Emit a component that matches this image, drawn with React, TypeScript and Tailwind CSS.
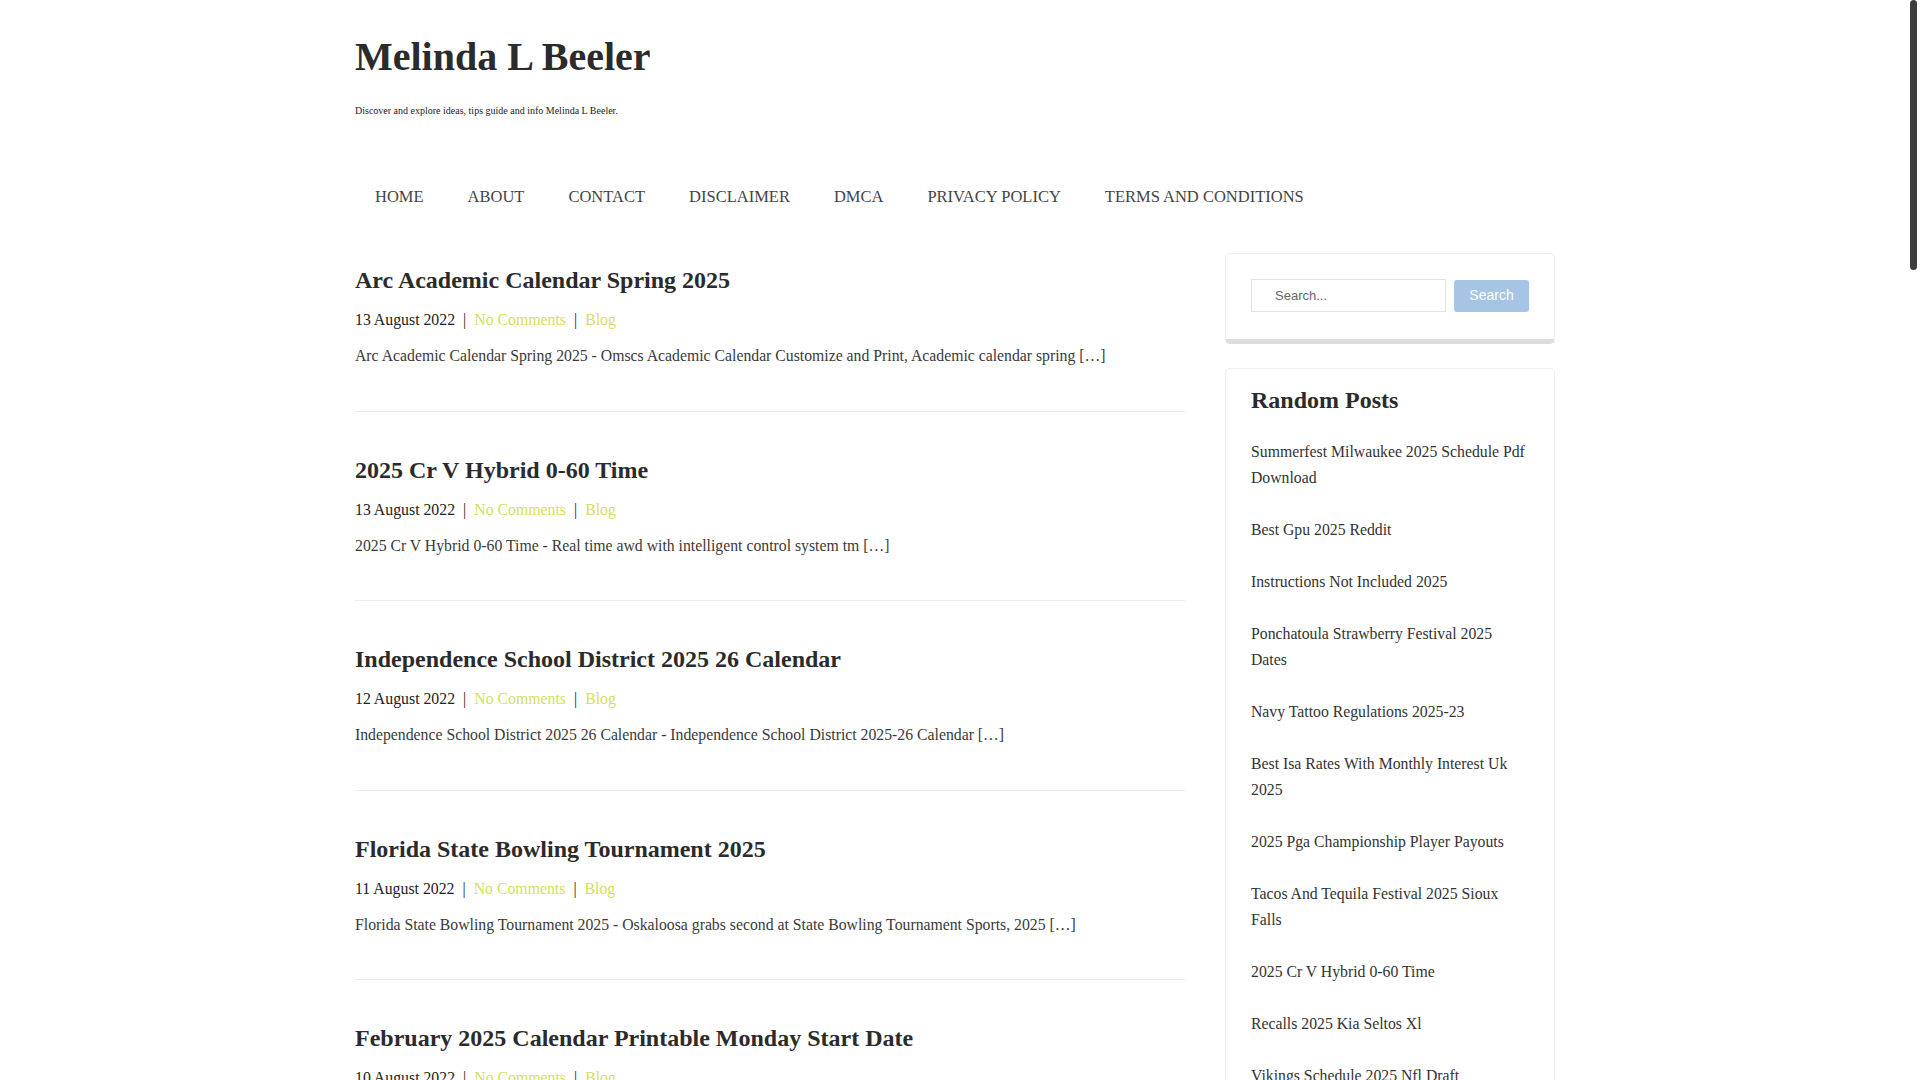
import React from "react";

const posts = [
  {
    title: "Arc Academic Calendar Spring 2025",
    date: "13 August 2022",
    excerpt:
      "Arc Academic Calendar Spring 2025 - Omscs Academic Calendar Customize and Print, Academic calendar spring […]",
  },
  {
    title: "2025 Cr V Hybrid 0-60 Time",
    date: "13 August 2022",
    excerpt: "2025 Cr V Hybrid 0-60 Time - Real time awd with intelligent control system tm […]",
  },
  {
    title: "Independence School District 2025 26 Calendar",
    date: "12 August 2022",
    excerpt:
      "Independence School District 2025 26 Calendar - Independence School District 2025-26 Calendar […]",
  },
  {
    title: "Florida State Bowling Tournament 2025",
    date: "11 August 2022",
    excerpt:
      "Florida State Bowling Tournament 2025 - Oskaloosa grabs second at State Bowling Tournament Sports, 2025 […]",
  },
  {
    title: "February 2025 Calendar Printable Monday Start Date",
    date: "10 August 2022",
    excerpt:
      "February 2025 Calendar Printable Monday Start Date - February 2025 Calendar Printable Monday Start […]",
  },
];

const randomPosts = [
  "Summerfest Milwaukee 2025 Schedule Pdf Download",
  "Best Gpu 2025 Reddit",
  "Instructions Not Included 2025",
  "Ponchatoula Strawberry Festival 2025 Dates",
  "Navy Tattoo Regulations 2025-23",
  "Best Isa Rates With Monthly Interest Uk 2025",
  "2025 Pga Championship Player Payouts",
  "Tacos And Tequila Festival 2025 Sioux Falls",
  "2025 Cr V Hybrid 0-60 Time",
  "Recalls 2025 Kia Seltos Xl",
  "Vikings Schedule 2025 Nfl Draft",
];

const nav = ["HOME", "ABOUT", "CONTACT", "DISCLAIMER", "DMCA", "PRIVACY POLICY", "TERMS AND CONDITIONS"];

export default function App() {
  return (
    <div className="min-h-screen bg-white text-[#333] font-['Liberation_Serif','Times_New_Roman',serif]">
      <div className="pointer-events-none fixed right-[3px] top-0 h-[270px] w-[7px] rounded-full bg-[#3d3d3d]" />
      <div className="mx-auto w-[1210px] pr-[10px]">
        <header className="pt-[33px]">
          <h1 className="text-[40px] font-bold leading-[48px] text-[#2b2b2b]">Melinda L Beeler</h1>
          <p className="mt-[22px] text-[10px] leading-[15px] text-[#222]">
            Discover and explore ideas, tips guide and info Melinda L Beeler.
          </p>
        </header>
        <nav className="mt-[67px] flex gap-[44px] pl-5">
          {nav.map((n) => (
            <a key={n} className="text-[16.5px] leading-6 text-[#444]">
              {n}
            </a>
          ))}
        </nav>
        <div className="mt-[44px] flex gap-[40px]">
          <main className="w-[830px]">
            {posts.map((p, i) => (
              <article
                key={p.title}
                className={`border-b border-[#ececec] pb-[42.5px] ${i === 0 ? "pt-3" : "pt-[43px]"}`}
              >
                <h2 className="text-[24px] font-bold leading-[30px] text-[#2b2b2b]">{p.title}</h2>
                <div className="mt-[13px] text-[15.8px] leading-6 text-[#222]">
                  {p.date}
                  <span className="px-[8px]">|</span>
                  <a className="text-[#d4df5b]">No Comments</a>
                  <span className="px-[8px]">|</span>
                  <a className="text-[#d4df5b]">Blog</a>
                </div>
                <p className="mt-[12px] text-[15.75px] leading-6 text-[#3a3a3a]">{p.excerpt}</p>
              </article>
            ))}
          </main>
          <aside className="w-[330px]">
            <div className="rounded-[5px] border border-[#eee] border-b-[5px] border-b-[#ddd] px-[25px] pt-[25px] pb-[27px]">
              <form className="flex items-center gap-[8px]">
                <input
                  placeholder="Search..."
                  className="h-[33px] w-[195px] border border-[#e3e3e3] pl-[23px] text-[13px] text-[#555] placeholder:text-[#666] font-['Liberation_Sans',Arial,sans-serif] outline-none"
                />
                <button
                  type="button"
                  className="h-[32px] w-[75px] rounded-[3px] bg-[#a6c4e4] text-[14px] text-white font-['Liberation_Sans',Arial,sans-serif]"
                >
                  Search
                </button>
              </form>
            </div>
            <div className="mt-[24px] rounded-[5px] border border-[#eee] px-[25px] pt-[16px] pb-[30px]">
              <h3 className="text-[24px] font-bold leading-[30px] text-[#2b2b2b]">Random Posts</h3>
              <ul className="mt-[23.5px] flex flex-col gap-[26px]">
                {randomPosts.map((r) => (
                  <li key={r} className="text-[15.75px] leading-[26px] text-[#333]">
                    <a>{r}</a>
                  </li>
                ))}
              </ul>
            </div>
          </aside>
        </div>
      </div>
    </div>
  );
}
